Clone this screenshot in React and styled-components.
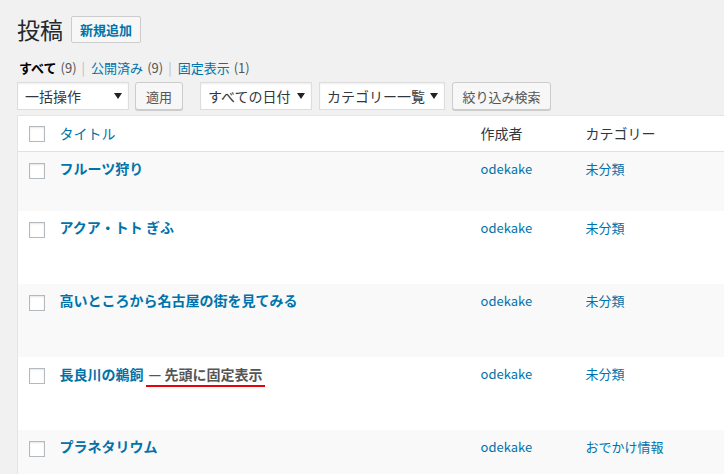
import React from 'react';
import styled, { createGlobalStyle } from 'styled-components';

const GlobalStyle = createGlobalStyle`
  body {
    margin: 0;
    background: #f1f1f1;
    font-family: "Noto Sans CJK JP", "Noto Sans", sans-serif;
    color: #444;
    overflow: hidden;
  }
`;

const Root = styled.div`
  width: 724px;
  height: 474px;
  overflow: hidden;
  padding-left: 17px;
  box-sizing: border-box;
`;

const Heading = styled.div`
  display: flex;
  align-items: center;
  gap: 8px;
  margin-top: 15px;
  height: 28px;
`;

const Title = styled.h1`
  margin: 0;
  font-size: 23px;
  font-weight: 400;
  line-height: 27px;
  color: #23282d;
`;

const AddButton = styled.a`
  display: inline-flex;
  align-items: center;
  height: 27px;
  box-sizing: border-box;
  padding: 0 8px;
  border: 1px solid #ccc;
  border-radius: 2px;
  background: #f7f7f7;
  color: #0073aa;
  font-size: 13px;
  font-weight: 700;
`;

const Filters = styled.ul`
  display: flex;
  align-items: center;
  margin: 16px 0 0 2px;
  padding: 0;
  list-style: none;
  font-size: 13px;
  line-height: 18px;
  color: #666;
`;

const FilterItem = styled.li`
  display: flex;
  align-items: center;
  gap: 4px;
`;

const FilterLink = styled.a`
  color: ${({ $current }) => ($current ? '#000' : '#0073aa')};
  font-weight: ${({ $current }) => ($current ? 700 : 400)};
`;

const Count = styled.span`
  color: #555;
`;

const Sep = styled.span`
  margin: 0 6px 0 5px;
  color: #bbb;
`;

const Toolbar = styled.div`
  display: flex;
  align-items: center;
  margin-top: 5px;
  height: 28px;
`;

const Select = styled.div`
  display: flex;
  align-items: center;
  justify-content: space-between;
  width: ${({ $w }) => $w}px;
  height: 28px;
  box-sizing: border-box;
  padding: 0 6px 0 7px;
  margin-left: ${({ $ml }) => $ml || 0}px;
  background: #fff;
  border: 1px solid #ddd;
  box-shadow: inset 0 1px 2px rgba(0, 0, 0, 0.07);
  font-size: 14px;
  color: #32373c;
`;

const Button = styled.button`
  height: 28px;
  width: ${({ $w }) => $w}px;
  margin-left: ${({ $ml }) => $ml || 0}px;
  padding: 0;
  background: #f7f7f7;
  border: 1px solid #ccc;
  border-radius: 3px;
  box-shadow: 0 1px 0 #ccc;
  font-family: inherit;
  font-size: 13px;
  color: #555;
`;

const Table = styled.table`
  margin-top: 5px;
  width: 760px;
  border-collapse: collapse;
  table-layout: fixed;
  background: #fff;
  border: 1px solid #e5e5e5;
`;

const HeadCell = styled.th`
  padding: 8px 10px;
  text-align: left;
  font-weight: 400;
  font-size: 14px;
  line-height: 19px;
  color: #32373c;
  border-bottom: 1px solid #e1e1e1;
  vertical-align: top;
`;

const Row = styled.tr`
  background: ${({ $alt }) => ($alt ? '#f9f9f9' : '#fff')};
  height: ${({ $h }) => $h}px;
`;

const Cell = styled.td`
  padding: 7px 10px 8px;
  font-size: 13px;
  line-height: 20px;
  vertical-align: top;
  color: #0073aa;
`;

const CheckCell = styled.td`
  padding: 11px 0 0 11px;
  vertical-align: top;
`;

const CheckHead = styled.th`
  padding: 10px 0 0 11px;
  vertical-align: top;
  border-bottom: 1px solid #e1e1e1;
`;

const Box = styled.span`
  display: block;
  width: 16px;
  height: 16px;
  box-sizing: border-box;
  border: 1px solid #b4b9be;
  background: #fff;
  box-shadow: inset 0 1px 2px rgba(0, 0, 0, 0.1);
`;

const PostTitle = styled.a`
  font-size: 14px;
  font-weight: 700;
  line-height: 19px;
  color: #0073aa;
`;

const PostState = styled.span`
  font-size: 14px;
  font-weight: 700;
  color: #555;
  border-bottom: 2px solid #e8000a;
  padding: 0 3px 1px;
  margin-left: 2px;
`;

const HeadLink = styled.a`
  color: #0073aa;
`;

function Arrow() {
  return (
    <svg width="8" height="6" viewBox="0 0 8 6">
      <path d="M0 0h8L4 6z" fill="#222" />
    </svg>
  );
}

const posts = [
  { title: 'フルーツ狩り', cat: '未分類', h: 59 },
  { title: 'アクア・トト ぎふ', cat: '未分類', h: 73 },
  { title: '高いところから名古屋の街を見てみる', cat: '未分類', h: 73 },
  { title: '長良川の鵜飼', cat: '未分類', h: 73, sticky: true },
  { title: 'プラネタリウム', cat: 'おでかけ情報', h: 73 },
];

export default function App() {
  return (
    <Root>
      <GlobalStyle />
      <Heading>
        <Title>投稿</Title>
        <AddButton>新規追加</AddButton>
      </Heading>
      <Filters>
        <FilterItem>
          <FilterLink $current>すべて</FilterLink>
          <Count>(9)</Count>
        </FilterItem>
        <Sep>|</Sep>
        <FilterItem>
          <FilterLink>公開済み</FilterLink>
          <Count>(9)</Count>
        </FilterItem>
        <Sep>|</Sep>
        <FilterItem>
          <FilterLink>固定表示</FilterLink>
          <Count>(1)</Count>
        </FilterItem>
      </Filters>
      <Toolbar>
        <Select $w={112}>
          一括操作
          <Arrow />
        </Select>
        <Button $w={48} $ml={6}>適用</Button>
        <Select $w={112} $ml={17}>
          すべての日付
          <Arrow />
        </Select>
        <Select $w={126} $ml={7}>
          カテゴリー一覧
          <Arrow />
        </Select>
        <Button $w={99} $ml={7}>絞り込み検索</Button>
      </Toolbar>
      <Table>
        <colgroup>
          <col style={{ width: 32 }} />
          <col style={{ width: 421 }} />
          <col style={{ width: 105 }} />
          <col />
        </colgroup>
        <thead>
          <tr>
            <CheckHead>
              <Box />
            </CheckHead>
            <HeadCell>
              <HeadLink>タイトル</HeadLink>
            </HeadCell>
            <HeadCell>作成者</HeadCell>
            <HeadCell>カテゴリー</HeadCell>
          </tr>
        </thead>
        <tbody>
          {posts.map((p, i) => (
            <Row key={p.title} $alt={i % 2 === 0} $h={p.h}>
              <CheckCell>
                <Box />
              </CheckCell>
              <Cell>
                <PostTitle>{p.title}</PostTitle>
                {p.sticky && <PostState>— 先頭に固定表示</PostState>}
              </Cell>
              <Cell>odekake</Cell>
              <Cell>{p.cat}</Cell>
            </Row>
          ))}
        </tbody>
      </Table>
    </Root>
  );
}
